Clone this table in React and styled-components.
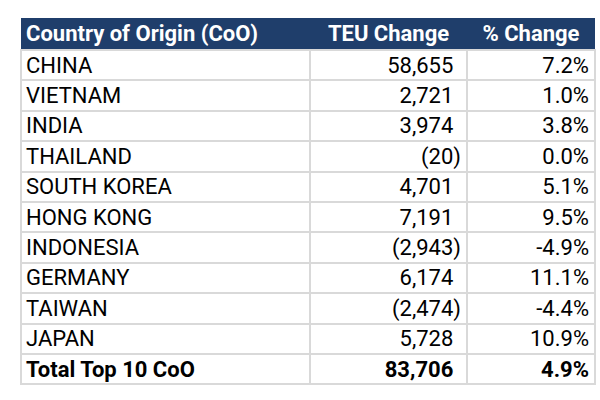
import styled, { createGlobalStyle } from "styled-components";

const GlobalStyle = createGlobalStyle`
  body {
    margin: 0;
    background: #ffffff;
    font-family: Roboto, "Liberation Sans", sans-serif;
  }
`;

const Page = styled.div`
  width: 600px;
  height: 400px;
  padding: 18px 0 0 20px;
  box-sizing: border-box;
`;

const Table = styled.table`
  width: 574px;
  border-collapse: collapse;
  table-layout: fixed;
  color: #000000;
`;

const HeadCell = styled.th`
  background: #1f3e6b;
  color: #ffffff;
  font-size: 22px;
  font-weight: 700;
  height: 31px;
  padding: 0 5px;
  text-align: ${(props) => (props.left ? "left" : "center")};
  white-space: nowrap;
  line-height: 1;
`;

const Row = styled.tr`
  height: 30.4px;
`;

const Cell = styled.td`
  border: 2px solid #d9d9d9;
  border-top: ${(props) => (props.rule ? "2px solid #000000" : "2px solid #d9d9d9")};
  font-size: 22px;
  font-weight: ${(props) => (props.bold ? 700 : 400)};
  padding: 1px 5px 0 4px;
  text-align: ${(props) => (props.num ? "right" : "left")};
  white-space: nowrap;
  line-height: 1;
`;

const Paren = styled.span`
  visibility: hidden;
`;

const rows = [
  ["CHINA", 58655, "7.2%"],
  ["VIETNAM", 2721, "1.0%"],
  ["INDIA", 3974, "3.8%"],
  ["THAILAND", -20, "0.0%"],
  ["SOUTH KOREA", 4701, "5.1%"],
  ["HONG KONG", 7191, "9.5%"],
  ["INDONESIA", -2943, "-4.9%"],
  ["GERMANY", 6174, "11.1%"],
  ["TAIWAN", -2474, "-4.4%"],
  ["JAPAN", 5728, "10.9%"],
];

const Teu = ({ value }) => {
  const text = Math.abs(value).toLocaleString("en-US");
  if (value < 0) return <>({text})</>;
  return (
    <>
      {text}
      <Paren>)</Paren>
    </>
  );
};

const App = () => {
  return (
    <Page>
      <GlobalStyle />
      <Table>
        <colgroup>
          <col style={{ width: 289 }} />
          <col style={{ width: 157 }} />
          <col style={{ width: 128 }} />
        </colgroup>
        <thead>
          <tr>
            <HeadCell left>Country of Origin (CoO)</HeadCell>
            <HeadCell>TEU Change</HeadCell>
            <HeadCell>% Change</HeadCell>
          </tr>
        </thead>
        <tbody>
          {rows.map(([name, teu, pct]) => (
            <Row key={name}>
              <Cell>{name}</Cell>
              <Cell num>
                <Teu value={teu} />
              </Cell>
              <Cell num>{pct}</Cell>
            </Row>
          ))}
          <Row>
            <Cell bold>Total Top 10 CoO</Cell>
            <Cell num bold rule>
              <Teu value={83706} />
            </Cell>
            <Cell num bold rule>
              4.9%
            </Cell>
          </Row>
        </tbody>
      </Table>
    </Page>
  );
};

export default App;
